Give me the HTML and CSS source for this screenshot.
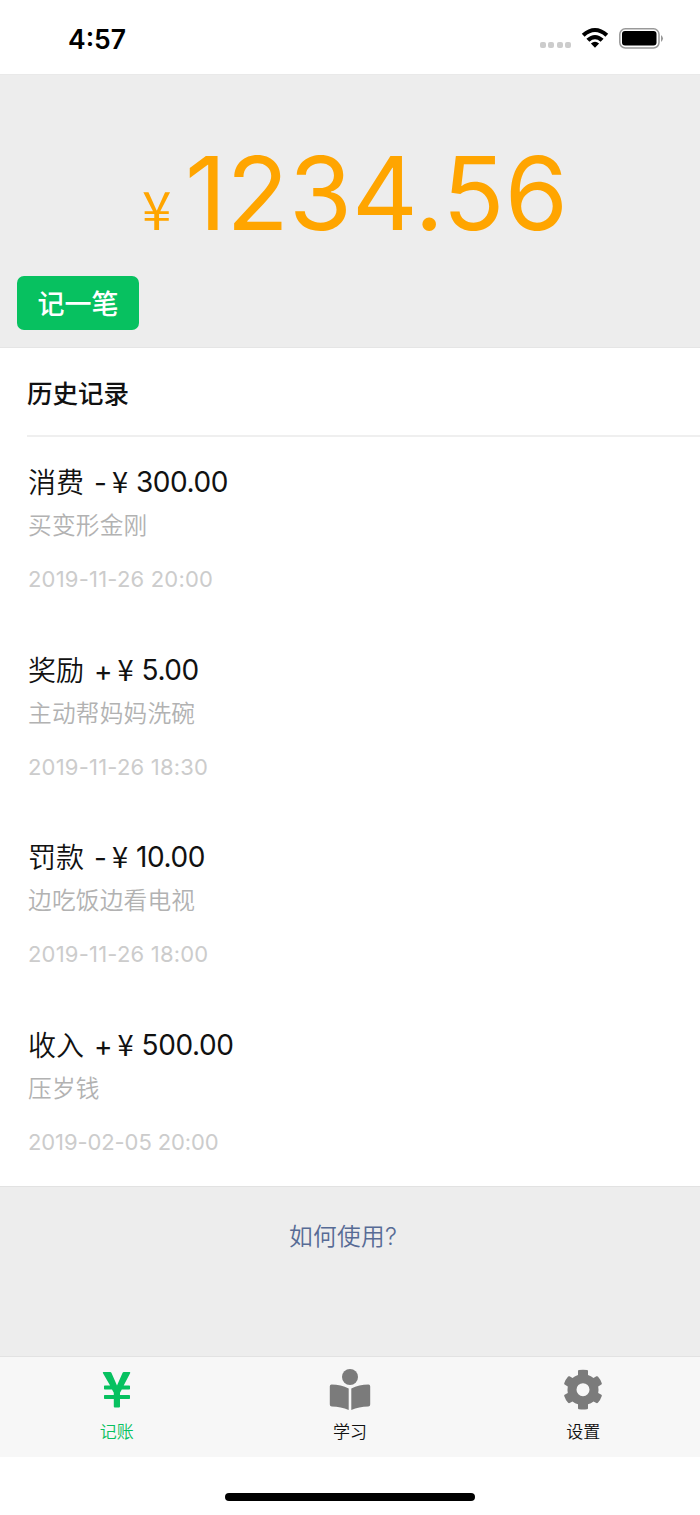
FILE: index.html
```html
<!DOCTYPE html>
<html lang="zh-CN">
<head>
<meta charset="utf-8">
<title>记账</title>
<link rel="stylesheet" href="styles.css">
</head>
<body>
<div class="screen">
  <header class="status">
    <span class="time">4:57</span>
    <div class="indicators">
      <span class="signal"><i></i><i></i><i></i><i></i></span>
      <svg class="wifi" width="28" height="21" viewBox="0 0 28 21"><path d="M.8 5.800Q14-5.600 27.200 5.800L24.400 8.700Q14-.6 3.600 8.700ZM5.400 10.800Q14 3.200 22.600 10.800L19.600 13.700Q14 9 8.400 13.700ZM9.900 15.500Q14 11.800 18.100 15.500L14 19.800Z"/></svg>
      <svg class="battery" width="45" height="21" viewBox="0 0 45 21"><rect x=".8" y=".8" width="39.200" height="19.200" rx="5.500" fill="none" stroke="#999" stroke-width="1.500"/><rect x="3" y="3" width="34.500" height="14.600" rx="3"/><path d="M42 7Q46 10.500 42 14Z" fill="#999"/></svg>
    </div>
  </header>
  <section class="summary">
    <div class="balance"><span class="currency">¥</span><span class="amount">1234.56</span></div>
    <button class="add">记一笔</button>
  </section>
  <main class="history">
    <h2 class="heading">历史记录</h2>
    <article class="record"><h3 class="title"><span class="kind">消费</span><span class="sign">-</span><span class="yen">¥</span><span class="sum">300.00</span></h3><p class="note">买变形金刚</p><time class="date">2019-11-26 20:00</time></article>
    <article class="record"><h3 class="title"><span class="kind">奖励</span><span class="sign">+</span><span class="yen">¥</span><span class="sum">5.00</span></h3><p class="note">主动帮妈妈洗碗</p><time class="date">2019-11-26 18:30</time></article>
    <article class="record"><h3 class="title"><span class="kind">罚款</span><span class="sign">-</span><span class="yen">¥</span><span class="sum">10.00</span></h3><p class="note">边吃饭边看电视</p><time class="date">2019-11-26 18:00</time></article>
    <article class="record"><h3 class="title"><span class="kind">收入</span><span class="sign">+</span><span class="yen">¥</span><span class="sum">500.00</span></h3><p class="note">压岁钱</p><time class="date wide">2019-02-05 20:00</time></article>
  </main>
  <div class="help"><a class="help-link">如何使用?</a></div>
  <nav class="tabs">
    <a class="tab active"><svg width="42" height="42" viewBox="0 0 42 42"><path d="M7.500 3h6.700q.8 0 1.200.8L21 16.500l5.600-12.700q.4-.8 1.200-.8h5.700q1.200 0 .6 1.200L27.700 16.500h5.600q.7 0 .7.700v2.600q0 .7-.7.700h-7.500L24 23.800V26h9.300q.7 0 .7.700v2.600q0 .7-.7.700H24v7.600q0 1-1 1h-4.200q-1 0-1-1V30H8.700q-.7 0-.7-.7v-2.600q0-.7.7-.7h9.100v-2.200L16 20.500H8.700q-.7 0-.7-.7v-2.600q0-.7.7-.7h5.400L7 4.200Q6.400 3 7.500 3Z"/></svg><span>记账</span></a>
    <a class="tab"><svg width="42" height="42" viewBox="0 0 42 42"><circle cx="21" cy="8" r="8"/><path d="M2.500 15.500Q12 15.500 19.700 19.500V41Q12 37.500 2.800 37.500Q.8 37.500.8 35.500V17.300Q.8 15.500 2.500 15.500ZM39.500 15.500Q30 15.500 22.300 19.500V41Q30 37.500 39.200 37.500Q41.200 37.500 41.200 35.500V17.300Q41.200 15.500 39.500 15.500Z"/></svg><span>学习</span></a>
    <a class="tab"><svg width="42" height="42" viewBox="0 0 42 42"><path fill-rule="evenodd" d="M16 2Q16 1.200 17 1.100Q21 .5 25 1.100Q26 1.200 26 2V6Q29 7 31.500 8.900L34.400 7.300Q35.200 6.900 35.900 7.600Q38.600 10.700 39.800 14.300Q40 15.100 39.400 15.500L36.200 17.500Q36.800 20.700 36.200 23.900L39.400 25.800Q40 26.200 39.800 27Q38.600 30.700 35.900 33.700Q35.200 34.400 34.400 34L31.500 32.400Q29 34.400 26 35.300V39.300Q26 40.100 25 40.200Q21 40.800 17 40.200Q16 40.100 16 39.300V35.300Q13 34.400 10.500 32.400L7.600 34Q6.800 34.400 6.100 33.700Q3.400 30.700 2.200 27Q2 26.200 2.600 25.800L5.800 23.900Q5.200 20.700 5.800 17.500L2.600 15.500Q2 15.100 2.200 14.300Q3.400 10.700 6.100 7.600Q6.800 6.900 7.600 7.300L10.500 8.900Q13 7 16 6ZM21 14.200a6.500 6.500 0 1 0 0 13a6.500 6.500 0 0 0 0-13Z"/></svg><span>设置</span></a>
  </nav>
  <footer class="home"><span class="home-bar"></span></footer>
</div>
</body>
</html>
```
FILE: styles.css
```css
* { box-sizing: border-box; }
body { margin: 0; background: #fff; color: #111; font-family: Inter, "Noto Sans CJK SC", sans-serif; }
h2, h3, p { margin: 0; font-weight: 400; }
.screen { width: 700px; height: 1515px; display: flex; flex-direction: column; overflow: hidden; }

.status { height: 74px; flex: none; display: flex; justify-content: space-between; padding: 22px 36px 0 68px; color: #000; }
.time { font-size: 26.500px; font-weight: 600; line-height: 34px; }
.indicators { display: flex; padding-top: 6px; height: 27px; }
.signal { display: flex; gap: 2.500px; align-items: flex-end; margin-right: 10px; padding-bottom: 1px; height: 21px; }
.signal i { width: 6px; height: 6px; border-radius: 2px; background: #ccc; }
.wifi { margin-right: 10px; }

.summary { height: 274px; flex: none; background: #ededed; border-bottom: 1px solid #e5e5e5; border-top: 1px solid #e9e9e9; display: flex; flex-direction: column; align-items: flex-start; }
.balance { width: 100%; height: 201px; padding: 56px 0 0 142px; display: flex; align-items: baseline; color: #ffa500; line-height: 124px; }
.currency { width: 43px; font-family: "Noto Sans CJK SC", sans-serif; font-size: 53px; }
.amount { font-size: 102px; letter-spacing: .1px; }
.add { margin-left: 17px; width: 122px; height: 54px; padding: 0; border: 0; border-radius: 7px; background: #07c160; color: #fff; font: 500 27px/54px "Noto Sans CJK SC", sans-serif; }

.history { height: 838px; flex: none; }
.heading { margin-left: 27px; height: 89px; border-bottom: 2px solid #efefef; font-size: 25.500px; font-weight: 500; line-height: 92px; }
.record { height: 187.600px; padding: 25px 28px 0; display: flex; flex-direction: column; }
.title { height: 40px; display: flex; font-size: 28px; line-height: 40px; white-space: pre; }
.kind { width: 66px; line-height: 42px; font-weight: 350; }
.sign { margin-right: 5px; line-height: 42px; }
.yen { width: 24px; font-family: "Noto Sans CJK SC", sans-serif; font-size: 29px; line-height: 37px; }
.sum { letter-spacing: -.4px; line-height: 41px; }
.note { height: 34px; margin-top: 7px; color: #b2b2b2; font-size: 23.700px; font-weight: 350; line-height: 34px; letter-spacing: .2px; }
.date { height: 30px; margin-top: 21px; color: #ccc; font-size: 22px; line-height: 30px; letter-spacing: .2px; }
.wide { letter-spacing: -.1px; }

.help { height: 170px; flex: none; padding: 33px 0 0 289px; background: #ededed; border-top: 1px solid #e2e2e2; }
.help-link { color: #576b95; font-size: 23.700px; font-weight: 350; line-height: 34px; letter-spacing: .3px; }

.tabs { height: 101px; flex: none; display: flex; background: #f7f7f7; border-top: 1px solid #e2e2e2; }
.tab { flex: 1; padding-top: 12px; display: flex; flex-direction: column; align-items: center; color: #111; font-size: 17px; font-weight: 350; line-height: 24px; }
.tab svg { fill: #7b7b7b; margin-bottom: 9px; }
.active { color: #07c160; }
.active svg { fill: #07c160; }
.home { flex: 1; display: flex; justify-content: center; padding-top: 36px; }
.home-bar { width: 250px; height: 8px; border-radius: 4px; background: #000; }
```
